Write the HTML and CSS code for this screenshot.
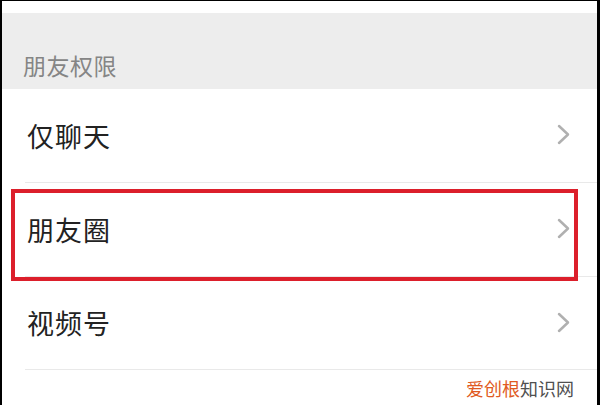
FILE: index.html
```html
<!DOCTYPE html>
<html lang="zh-CN">
<head>
<meta charset="utf-8">
<title>朋友权限</title>
<link rel="stylesheet" href="styles.css">
</head>
<body>
<div class="frame">
  <div class="topgap"></div>
  <div class="section-head">朋友权限</div>
  <div class="row row1">
    <span class="label">仅聊天</span>
    <svg class="chev" width="13" height="21" viewBox="0 0 13 21"><polyline points="2,2 11,10.5 2,19" fill="none" stroke="#b0b0b0" stroke-width="2.5" stroke-linecap="round" stroke-linejoin="round"/></svg>
  </div>
  <div class="row row2">
    <span class="label">朋友圈</span>
    <svg class="chev" width="13" height="21" viewBox="0 0 13 21"><polyline points="2,2 11,10.5 2,19" fill="none" stroke="#b0b0b0" stroke-width="2.5" stroke-linecap="round" stroke-linejoin="round"/></svg>
  </div>
  <div class="row row3">
    <span class="label">视频号</span>
    <svg class="chev" width="13" height="21" viewBox="0 0 13 21"><polyline points="2,2 11,10.5 2,19" fill="none" stroke="#b0b0b0" stroke-width="2.5" stroke-linecap="round" stroke-linejoin="round"/></svg>
  </div>
  <div class="footer"><span class="wm-a">爱创根</span><span class="wm-b">知识网</span></div>
  <div class="highlight"></div>
</div>
</body>
</html>
```
FILE: styles.css
```css
* { box-sizing: border-box; }
html, body { margin: 0; padding: 0; background: #fff; }
body {
  font-family: "Noto Sans CJK SC", "Noto Sans", sans-serif;
  width: 600px;
  height: 405px;
  overflow: hidden;
}
.frame {
  position: relative;
  width: 600px;
  height: 405px;
  border-top: 1px solid #000;
  border-left: 2px solid #000;
  border-right: 3px solid #000;
  background: #fff;
  display: flex;
  flex-direction: column;
}
.topgap { height: 12px; flex: none; }
.section-head {
  flex: none;
  height: 76px;
  background: #ededed;
  padding: 40px 0 0 21px;
  font-size: 23px;
  line-height: 24px;
  color: #858585;
  letter-spacing: 0.5px;
}
.row {
  flex: none;
  height: 94px;
  margin-left: 23px;
  padding: 0 27px 0 2px;
  border-bottom: 1px solid #e9e9e9;
  display: flex;
  align-items: center;
  justify-content: space-between;
}
.row3 { height: 93px; }
.label {
  font-size: 27px;
  line-height: 30px;
  color: #222;
  font-weight: 400;
  letter-spacing: 1px;
}
.chev { display: block; margin-top: -2px; }
.footer {
  flex: 1;
  display: flex;
  align-items: center;
  justify-content: flex-end;
  padding-right: 23px;
  font-size: 18px;
  line-height: 20px;
}
.wm-a { color: #e05a22; }
.wm-b { color: #505050; }
.highlight {
  position: absolute;
  left: 9px;
  top: 188px;
  width: 567px;
  height: 92px;
  border: 4px solid #dc1f2b;
}
```
